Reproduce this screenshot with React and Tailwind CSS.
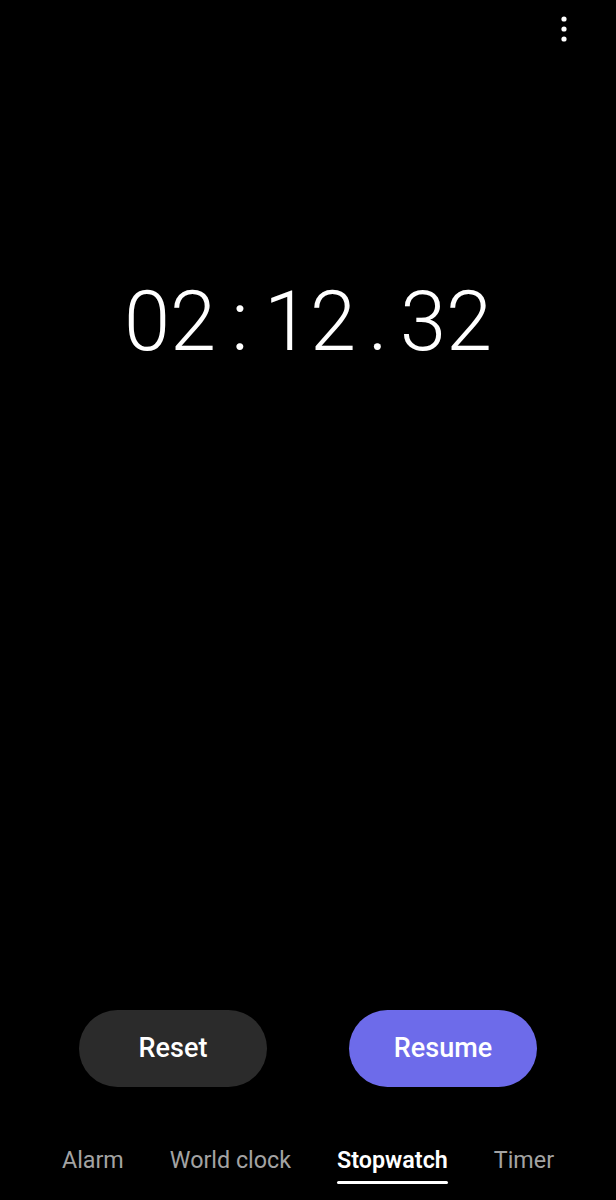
import React from 'react';

const tabs = ['Alarm', 'World clock', 'Stopwatch', 'Timer'];

const MoreIcon = () => (
    <svg width="6" height="26" viewBox="0 0 6 26" fill="#fff">
        <circle cx="3" cy="3" r="2.6" />
        <circle cx="3" cy="13" r="2.6" />
        <circle cx="3" cy="23" r="2.6" />
    </svg>
);

const App = () => {
    return (
        <div className='h-[1200px] w-full bg-black flex flex-col text-white font-["Roboto",sans-serif]'>
            <div className='h-[58px] flex justify-end items-center pr-[49px]'>
                <MoreIcon />
            </div>

            <div className='mt-[222px] flex justify-center items-center font-light text-[83px] leading-none'>
                <span>02</span>
                <span className='w-[48px] text-center'>:</span>
                <span>12</span>
                <span className='w-[44px] text-center'>.</span>
                <span>32</span>
            </div>

            <div className='flex-1' />

            <div className='flex justify-between px-[79px]'>
                <button className='w-[188px] h-[77px] rounded-full bg-[#2b2b2b] text-[27px] font-medium text-white'>
                    Reset
                </button>
                <button className='w-[188px] h-[77px] rounded-full bg-[#6d6bea] text-[27px] font-medium text-white'>
                    Resume
                </button>
            </div>

            <div className='mt-[56px] mb-[16px] flex justify-center gap-[46px] text-[23.3px]'>
                {tabs.map((t) => (
                    <div key={t} className='flex flex-col items-center'>
                        <span className={t === 'Stopwatch' ? 'font-semibold text-white' : 'text-[#a3a3a3]'}>{t}</span>
                        <span className={t === 'Stopwatch' ? 'mt-[3px] h-[3px] w-full rounded-full bg-white' : 'mt-[3px] h-[3px]'} />
                    </div>
                ))}
            </div>
        </div>
    );
};

export default App;
